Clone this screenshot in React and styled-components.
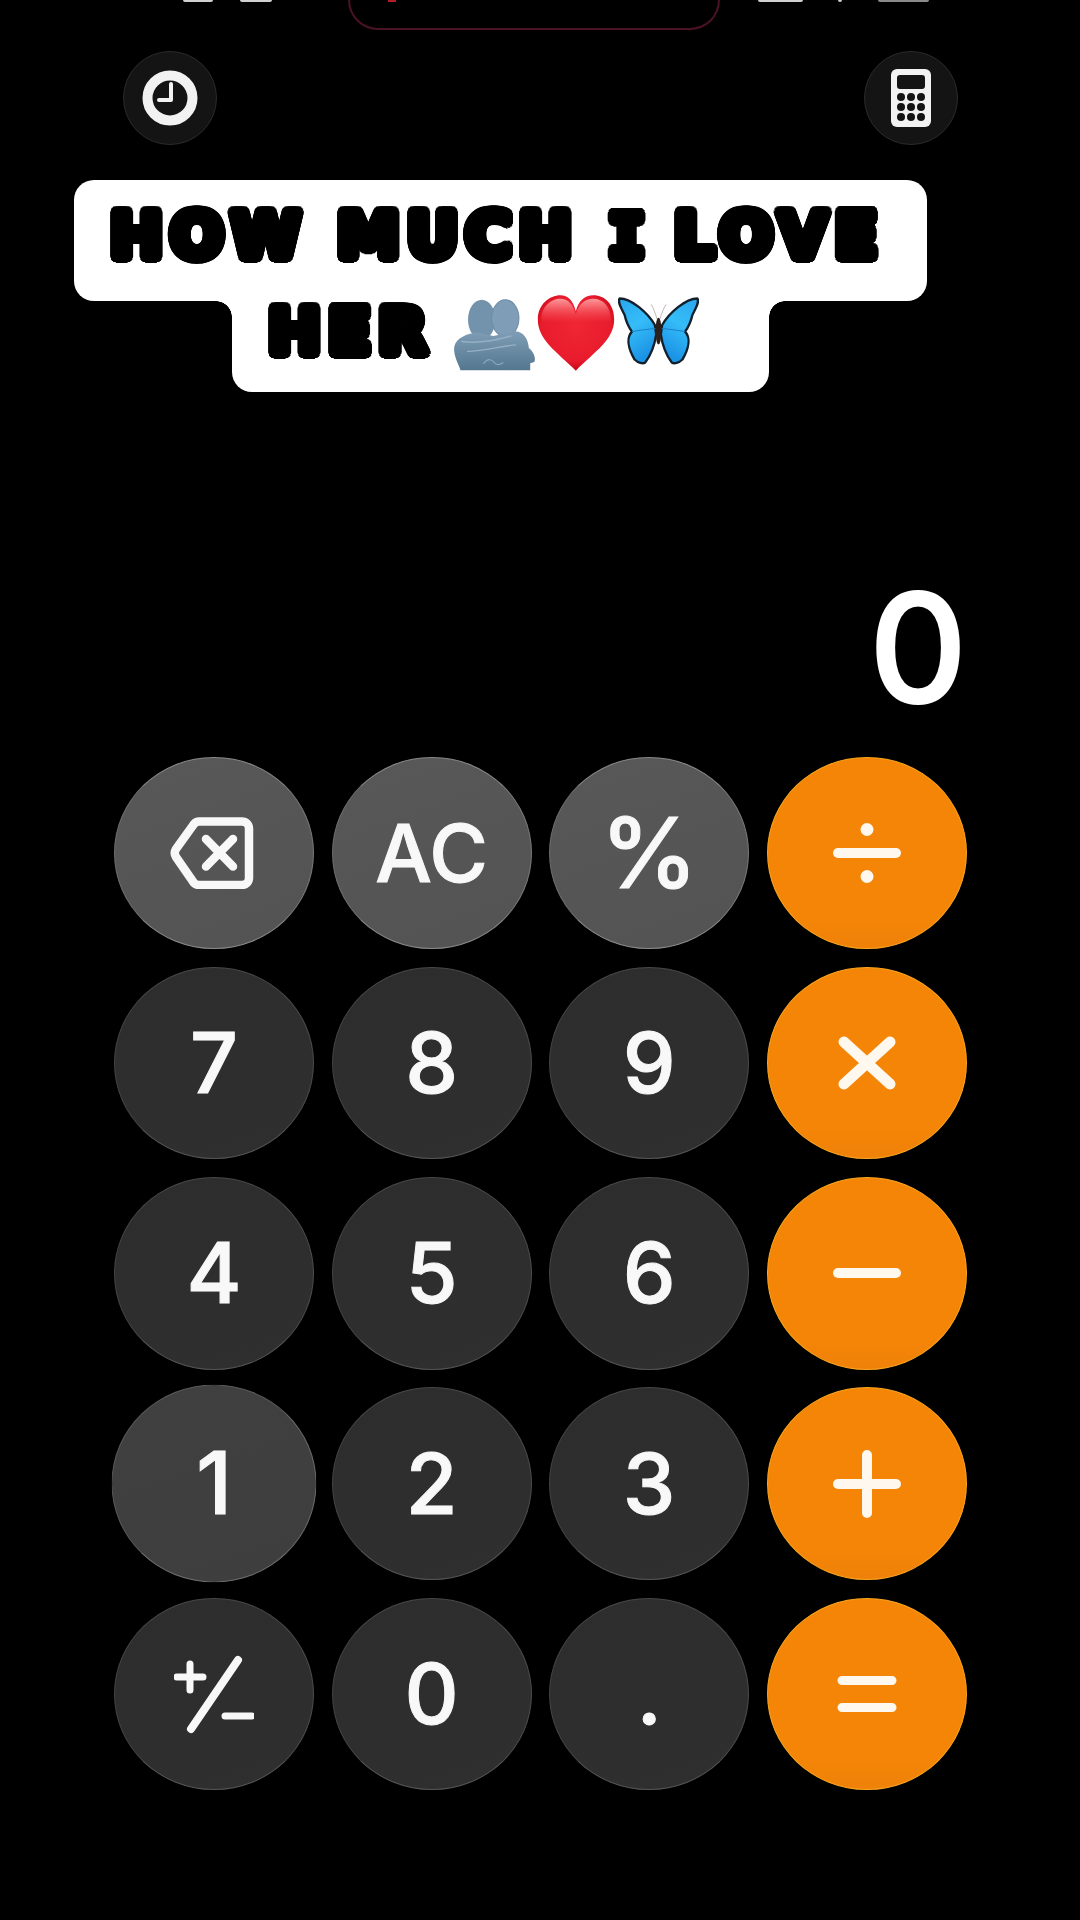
import React from "react";
import styled, { createGlobalStyle, css } from "styled-components";

const Global = createGlobalStyle`
  html, body { margin: 0; padding: 0; background: #000; }
  * { box-sizing: border-box; }
`;

const Page = styled.div`
  width: 1080px;
  height: 1920px;
  background: #000;
  overflow: hidden;
  font-family: Inter, "Liberation Sans", sans-serif;
`;

const StatusStrip = styled.div`
  display: flex;
  align-items: flex-start;
  height: 30px;
  padding-left: 183px;
`;

const StatusTick = styled.span`
  display: block;
  height: 2px;
  width: ${(p) => p.$w}px;
  margin-left: ${(p) => p.$ml || 0}px;
  background: ${(p) => p.$color || "#d0d0d0"};
  border-radius: 0 0 2px 2px;
`;

const Notch = styled.div`
  width: 372px;
  height: 30px;
  margin-left: 76px;
  padding-left: 38px;
  border: 2px solid #4a1226;
  border-top: none;
  border-radius: 0 0 34px 34px;
`;

const RecDot = styled.span`
  display: block;
  width: 8px;
  height: 2px;
  background: #b01c28;
`;

const TopBar = styled.div`
  display: flex;
  justify-content: space-between;
  margin-top: 21px;
  padding: 0 122px 0 123px;
`;

const RoundButton = styled.button`
  width: 94px;
  height: 94px;
  padding: 0;
  border-radius: 50%;
  border: 1.5px solid #2a2a2a;
  background: #141414;
  display: flex;
  align-items: center;
  justify-content: center;
`;

const Caption = styled.div`
  margin: 35px 0 0 74px;
  color: #000;
  font-family: "DejaVu Sans", "Liberation Sans", sans-serif;
  font-weight: 700;
`;

const CaptionTop = styled.div`
  width: 853px;
  height: 121px;
  padding: 28px 0 0 36px;
  background: #fff;
  border-radius: 20px;
`;

const CaptionBottom = styled.div`
  position: relative;
  width: 537px;
  height: 91px;
  margin-left: 158px;
  padding: 3px 0 0 36px;
  background: #fff;
  border-radius: 0 0 20px 20px;
  display: flex;
  align-items: flex-start;

  &::before, &::after {
    content: "";
    position: absolute;
    top: 0;
    width: 16px;
    height: 16px;
  }
  &::before {
    left: -16px;
    background: radial-gradient(circle at 0 100%, transparent 15.5px, #fff 16px);
  }
  &::after {
    right: -16px;
    background: radial-gradient(circle at 100% 100%, transparent 15.5px, #fff 16px);
  }
`;

const dilate = (() => {
  const out = [];
  for (let i = 0; i < 24; i++) {
    const a = (i / 24) * Math.PI * 2;
    out.push(`${(Math.cos(a) * 5.5).toFixed(2)}px ${(Math.sin(a) * 5.5).toFixed(2)}px 0 #000`);
    out.push(`${(Math.cos(a) * 2.8).toFixed(2)}px ${(Math.sin(a) * 2.8).toFixed(2)}px 0 #000`);
  }
  return out.join(",");
})();

const BubbleText = styled.span`
  display: block;
  font-size: 63px;
  line-height: 56px;
  letter-spacing: 7.3px;
  white-space: pre;
  text-shadow: ${dilate};
`;

const SlabLetter = styled.span`
  font-family: "DejaVu Sans Mono", monospace;
  font-weight: 700;
  font-size: 61px;
  letter-spacing: 0;
`;

const EmojiRow = styled.div`
  display: flex;
  align-items: flex-start;
  margin-left: 19px;
  margin-top: -1px;
`;

const Emoji = styled.svg`
  display: block;
  flex: none;
  margin-top: ${(p) => p.$mt || 0}px;
  margin-left: ${(p) => p.$ml || 0}px;
`;

const Display = styled.div`
  height: 364.5px;
  padding: 0 113px 51px 0;
  display: flex;
  align-items: flex-end;
  justify-content: flex-end;
  color: #fff;
  font-size: 152px;
  font-weight: 500;
  line-height: 116px;
  -webkit-text-stroke: 2px #fff;
`;

const Keypad = styled.div`
  display: grid;
  grid-template-columns: repeat(4, 200px);
  grid-auto-rows: 192.5px;
  column-gap: 17.6px;
  row-gap: 17.8px;
  padding-left: 114px;
`;

const tones = {
  fn: css`
    background: linear-gradient(160deg, #585858, #535353);
    border-color: #8a8a8a #7a7a7a #8c8c8c #6e6e6e;
  `,
  num: css`
    background: linear-gradient(160deg, #2d2d2d, #2f2f2f);
    border-color: #484848 #4c4c4c #565656 #444;
  `,
  active: css`
    background: linear-gradient(160deg, #404040, #3e3e3e);
    border-color: #5c5c5c #6a6a6a #707070 #585858;
    transform: scale(1.025);
  `,
  op: css`
    background: linear-gradient(180deg, #f48507 85%, #ef8109);
    border-color: #fba61e;
  `,
};

const Key = styled.button`
  width: 100%;
  height: 100%;
  padding: 0;
  border-radius: 50%;
  border: 1.5px solid;
  display: flex;
  align-items: center;
  justify-content: center;
  color: #f8f8f8;
  font-family: Inter, "Liberation Sans", sans-serif;
  font-size: ${(p) => p.$size || 84}px;
  font-weight: 550;
  line-height: 1;
  -webkit-text-stroke: 1px #f8f8f8;
  ${(p) => tones[p.$tone]}
`;

const Glyph = styled.svg`
  display: block;
  flex: none;
`;

const Stroke = styled.g`
  fill: none;
  stroke: ${(p) => p.$color || "#f8f8f8"};
  stroke-width: ${(p) => p.$w || 10}px;
  stroke-linecap: round;
  stroke-linejoin: round;
`;

const OP = "#fff8ee";

const BackspaceIcon = () => (
  <Glyph width="91" height="72" viewBox="0 0 91 72">
    <Stroke $w={8.5}>
      <path d="M30 4.5H73a7 7 0 0 1 7 7V61a7 7 0 0 1-7 7H30Q27 68 25 66L7 40Q4.5 36 7 32L25 7Q27 4.5 30 4.5Z" />
      <path d="M37 22L64 49.5M64 22L37 49.5" />
    </Stroke>
  </Glyph>
);

const Divide = () => (
  <Glyph width="68" height="60" viewBox="0 0 68 60">
    <Stroke $color={OP}><path d="M5 30H63" /></Stroke>
    <circle cx="34" cy="6.5" r="6.5" fill={OP} />
    <circle cx="34" cy="53.5" r="6.5" fill={OP} />
  </Glyph>
);

const Times = () => (
  <Glyph width="58" height="54" viewBox="0 0 58 54">
    <Stroke $color={OP} $w={11}><path d="M6 6L52 48M52 6L6 48" /></Stroke>
  </Glyph>
);

const Minus = () => (
  <Glyph width="68" height="12" viewBox="0 0 68 12">
    <Stroke $color={OP}><path d="M5 6H63" /></Stroke>
  </Glyph>
);

const Plus = () => (
  <Glyph width="68" height="68" viewBox="0 0 68 68">
    <Stroke $color={OP}><path d="M5 34H63M34 5V63" /></Stroke>
  </Glyph>
);

const Equals = () => (
  <Glyph width="60" height="38" viewBox="0 0 60 38">
    <Stroke $color={OP} $w={9}><path d="M5 5.5H55M5 32.5H55" /></Stroke>
  </Glyph>
);

const PlusMinus = () => (
  <Glyph width="80" height="80" viewBox="0 0 80 80">
    <Stroke $w={7}>
      <path d="M3 23H29M16 10V36" />
      <path d="M51 62H78" />
    </Stroke>
    <Stroke $w={8}><path d="M17 75L64 6" /></Stroke>
  </Glyph>
);

const ClockIcon = () => (
  <svg width="56" height="56" viewBox="0 0 56 56">
    <circle cx="28" cy="28" r="22.5" fill="none" stroke="#f2f2f2" strokeWidth="10" />
    <path d="M29 14V30H17" fill="none" stroke="#f2f2f2" strokeWidth="4" strokeLinejoin="round" strokeLinecap="round" />
  </svg>
);

const CalcIcon = () => (
  <svg width="40" height="58" viewBox="0 0 40 58">
    <rect width="40" height="58" rx="6" fill="#f2f2f2" />
    <rect x="6" y="6" width="28" height="14" rx="3" fill="#141414" />
    {[28, 38, 48].map((y) =>
      [10, 20, 30].map((x) => <circle key={`${x}-${y}`} cx={x} cy={y} r="4" fill="#141414" />)
    )}
  </svg>
);

const HugEmoji = () => (
  <Emoji width="82" height="72" viewBox="42 52 240 210" $mt={-4}>
    <defs>
      <linearGradient id="hugFill" x1="0" y1="0" x2="0" y2="1">
        <stop offset="0" stopColor="#7f9db6" />
        <stop offset="1" stopColor="#54778f" />
      </linearGradient>
    </defs>
    <ellipse cx="126" cy="112" rx="40" ry="58" fill="#7393ad" />
    <ellipse cx="195" cy="108" rx="40" ry="54" fill="#7f9db6" stroke="#6c8ca6" strokeWidth="3" />
    <path
      d="M46 190C52 165 85 152 115 150L160 160L225 146C250 148 262 170 264 195C276 205 286 222 280 236L268 240V260H64C56 238 42 215 46 190Z"
      fill="url(#hugFill)"
    />
    <path d="M68 176C110 182 170 172 212 160M85 205C130 205 180 190 225 186" fill="none" stroke="#96b0c6" strokeWidth="4" strokeLinecap="round" />
    <path d="M132 240C145 222 158 230 165 240C172 246 180 244 188 238" fill="none" stroke="#8aa6bd" strokeWidth="3.5" strokeLinecap="round" />
  </Emoji>
);

const HeartEmoji = () => (
  <Emoji width="78" height="76" viewBox="293 27 231 226" $ml={2} $mt={-8}>
    <defs>
      <radialGradient id="heartFill" cx="0.5" cy="0.42" r="0.62">
        <stop offset="0" stopColor="#f02634" />
        <stop offset="0.72" stopColor="#e81c2c" />
        <stop offset="1" stopColor="#bf0010" />
      </radialGradient>
      <linearGradient id="heartShine" x1="0" y1="0" x2="0" y2="1">
        <stop offset="0" stopColor="#ffb0b0" stopOpacity="0.85" />
        <stop offset="0.35" stopColor="#ff6a70" stopOpacity="0" />
      </linearGradient>
    </defs>
    <path
      d="M408 252C350 195 295 160 295 100C295 55 330 28 362 28C385 28 400 45 408 75C416 45 435 28 460 28C495 28 522 55 522 100C522 160 465 195 408 252Z"
      fill="url(#heartFill)"
    />
    <path
      d="M408 240C355 190 305 155 305 102C305 60 335 38 362 38C385 38 400 55 408 85C416 55 435 38 460 38C488 38 512 60 512 102C512 155 460 190 408 240Z"
      fill="url(#heartShine)"
    />
  </Emoji>
);

const ButterflyWing = () => (
  <g>
    <path
      d="M641 122C620 85 570 42 535 42C528 52 540 72 550 92C555 115 563 130 572 142C555 160 560 192 580 226C590 236 605 240 612 235C627 215 640 185 645 150Z"
      fill="url(#wingFill)"
      stroke="#12202c"
      strokeWidth="7"
      strokeLinejoin="round"
    />
    <path d="M572 142C590 138 620 135 643 132" fill="none" stroke="#1a80c8" strokeWidth="3" />
  </g>
);

const ButterflyEmoji = () => (
  <Emoji width="81" height="68" viewBox="530 38 244 204" $ml={3} $mt={-6}>
    <defs>
      <linearGradient id="wingFill" x1="0" y1="0" x2="0.4" y2="1">
        <stop offset="0" stopColor="#2aa6ee" />
        <stop offset="0.5" stopColor="#35bdf8" />
        <stop offset="1" stopColor="#1c94e6" />
      </linearGradient>
    </defs>
    <ButterflyWing />
    <g transform="translate(1304 0) scale(-1 1)">
      <ButterflyWing />
    </g>
    <path d="M648 105C642 85 636 70 630 60M656 105C662 85 668 70 675 60" fill="none" stroke="#b8a8a0" strokeWidth="2.5" />
    <ellipse cx="652" cy="140" rx="9" ry="40" fill="#2a211f" />
  </Emoji>
);

const rows = [
  { label: <BackspaceIcon />, tone: "fn", name: "Delete" },
  { label: "AC", tone: "fn", size: 80 },
  { label: "%", tone: "fn", size: 98 },
  { label: <Divide />, tone: "op", name: "Divide" },
  { label: "7", tone: "num" },
  { label: "8", tone: "num" },
  { label: "9", tone: "num" },
  { label: <Times />, tone: "op", name: "Multiply" },
  { label: "4", tone: "num" },
  { label: "5", tone: "num" },
  { label: "6", tone: "num" },
  { label: <Minus />, tone: "op", name: "Subtract" },
  { label: "1", tone: "active" },
  { label: "2", tone: "num" },
  { label: "3", tone: "num" },
  { label: <Plus />, tone: "op", name: "Add" },
  { label: <PlusMinus />, tone: "num", name: "Toggle sign" },
  { label: "0", tone: "num" },
  { label: ".", tone: "num" },
  { label: <Equals />, tone: "op", name: "Equals" },
];

export default function App() {
  return (
    <Page>
      <Global />
      <StatusStrip>
        <StatusTick $w={30} />
        <StatusTick $w={32} $ml={27} />
        <Notch>
          <RecDot />
        </Notch>
        <StatusTick $w={45} $ml={38} />
        <StatusTick $w={4} $ml={35} />
        <StatusTick $w={51} $ml={36} $color="#8a8a8a" />
      </StatusStrip>
      <TopBar>
        <RoundButton aria-label="History"><ClockIcon /></RoundButton>
        <RoundButton aria-label="Calculator"><CalcIcon /></RoundButton>
      </TopBar>
      <Caption>
        <CaptionTop>
          <BubbleText>HOW MUCH <SlabLetter>I</SlabLetter> LOVE</BubbleText>
        </CaptionTop>
        <CaptionBottom>
          <BubbleText>HER</BubbleText>
          <EmojiRow>
            <HugEmoji />
            <HeartEmoji />
            <ButterflyEmoji />
          </EmojiRow>
        </CaptionBottom>
      </Caption>
      <Display>0</Display>
      <Keypad>
        {rows.map((k, i) => (
          <Key key={i} $tone={k.tone} $size={k.size} aria-label={k.name}>
            {k.label}
          </Key>
        ))}
      </Keypad>
    </Page>
  );
}
